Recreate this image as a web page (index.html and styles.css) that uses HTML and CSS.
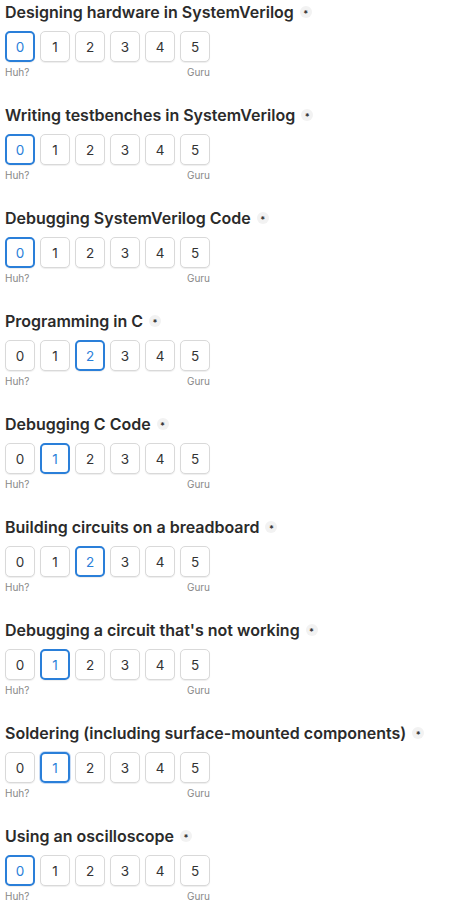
FILE: index.html
```html
<!DOCTYPE html>
<html>
<head>
<meta charset="utf-8">
<link rel="stylesheet" href="styles.css">
</head>
<body>
<div class="form">
  <div class="q">
    <div class="title">Designing hardware in SystemVerilog <span class="req">*</span></div>
    <div class="scale"><span class="opt sel">0</span><span class="opt">1</span><span class="opt">2</span><span class="opt">3</span><span class="opt">4</span><span class="opt">5</span></div>
    <div class="labels"><span>Huh?</span><span>Guru</span></div>
  </div>
  <div class="q">
    <div class="title">Writing testbenches in SystemVerilog <span class="req">*</span></div>
    <div class="scale"><span class="opt sel">0</span><span class="opt">1</span><span class="opt">2</span><span class="opt">3</span><span class="opt">4</span><span class="opt">5</span></div>
    <div class="labels"><span>Huh?</span><span>Guru</span></div>
  </div>
  <div class="q">
    <div class="title">Debugging SystemVerilog Code <span class="req">*</span></div>
    <div class="scale"><span class="opt sel">0</span><span class="opt">1</span><span class="opt">2</span><span class="opt">3</span><span class="opt">4</span><span class="opt">5</span></div>
    <div class="labels"><span>Huh?</span><span>Guru</span></div>
  </div>
  <div class="q">
    <div class="title">Programming in C <span class="req">*</span></div>
    <div class="scale"><span class="opt">0</span><span class="opt">1</span><span class="opt sel">2</span><span class="opt">3</span><span class="opt">4</span><span class="opt">5</span></div>
    <div class="labels"><span>Huh?</span><span>Guru</span></div>
  </div>
  <div class="q">
    <div class="title">Debugging C Code <span class="req">*</span></div>
    <div class="scale"><span class="opt">0</span><span class="opt sel">1</span><span class="opt">2</span><span class="opt">3</span><span class="opt">4</span><span class="opt">5</span></div>
    <div class="labels"><span>Huh?</span><span>Guru</span></div>
  </div>
  <div class="q">
    <div class="title">Building circuits on a breadboard <span class="req">*</span></div>
    <div class="scale"><span class="opt">0</span><span class="opt">1</span><span class="opt sel">2</span><span class="opt">3</span><span class="opt">4</span><span class="opt">5</span></div>
    <div class="labels"><span>Huh?</span><span>Guru</span></div>
  </div>
  <div class="q">
    <div class="title">Debugging a circuit that's not working <span class="req">*</span></div>
    <div class="scale"><span class="opt">0</span><span class="opt sel">1</span><span class="opt">2</span><span class="opt">3</span><span class="opt">4</span><span class="opt">5</span></div>
    <div class="labels"><span>Huh?</span><span>Guru</span></div>
  </div>
  <div class="q">
    <div class="title">Soldering (including surface-mounted components) <span class="req">*</span></div>
    <div class="scale"><span class="opt">0</span><span class="opt sel focus">1</span><span class="opt">2</span><span class="opt">3</span><span class="opt">4</span><span class="opt">5</span></div>
    <div class="labels"><span>Huh?</span><span>Guru</span></div>
  </div>
  <div class="q">
    <div class="title">Using an oscilloscope <span class="req">*</span></div>
    <div class="scale"><span class="opt sel">0</span><span class="opt">1</span><span class="opt">2</span><span class="opt">3</span><span class="opt">4</span><span class="opt">5</span></div>
    <div class="labels"><span>Huh?</span><span>Guru</span></div>
  </div>
</div>
</body>
</html>
```
FILE: styles.css
```css
html, body {
  margin: 0;
  padding: 0;
  background: #fff;
}
body {
  font-family: Inter, "Liberation Sans", sans-serif;
  color: #333;
}
.form {
  padding: 2px 5px 0 5px;
}
.q {
  height: 103px;
}
.title {
  font-size: 16px;
  font-weight: 600;
  line-height: 20px;
  height: 20px;
  color: #2b2b2b;
  display: flex;
  align-items: center;
  white-space: nowrap;
}
.req {
  display: inline-flex;
  align-items: center;
  justify-content: center;
  width: 12px;
  height: 12px;
  border-radius: 50%;
  background: #f2f2f2;
  color: #333;
  font-size: 9px;
  font-weight: 700;
  line-height: 12px;
  margin-left: 6px;
  padding-top: 3px;
  box-sizing: border-box;
}
.scale {
  display: flex;
  gap: 5px;
  margin-top: 9px;
}
.opt {
  width: 30px;
  height: 31px;
  box-sizing: border-box;
  border: 1px solid #d9d9d9;
  border-radius: 5px;
  display: flex;
  align-items: center;
  justify-content: center;
  font-size: 13.5px;
  font-weight: 400;
  color: #333;
  background: #fff;
  box-shadow: 0 1px 1px rgba(0,0,0,0.07);
}
.opt.sel {
  border: 2px solid #2a7fd9;
  color: #2a7fd9;
}
.opt.focus {
  box-shadow: 0 0 0 1px #c9dcf5;
}
.labels {
  display: flex;
  justify-content: space-between;
  width: 205px;
  margin-top: 4px;
  font-size: 10px;
  line-height: 12px;
  color: #888;
}
```
